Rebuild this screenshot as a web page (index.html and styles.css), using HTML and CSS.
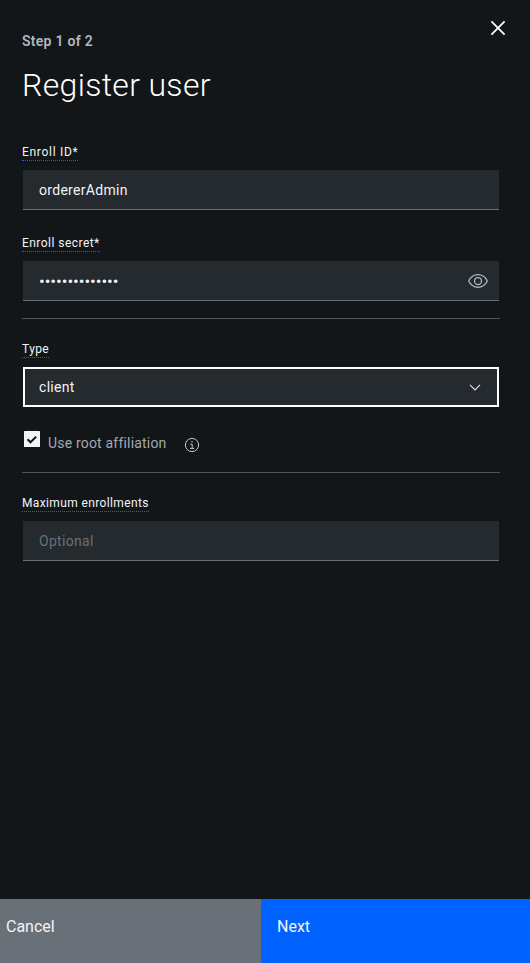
FILE: index.html
```html
<!DOCTYPE html>
<html lang="en">
<head>
<meta charset="utf-8">
<title>Register user</title>
<link rel="stylesheet" href="styles.css">
</head>
<body>
<main class="panel">
  <header class="header">
    <div>
      <p class="step"><span>Step 1 of 2</span></p>
      <h1 class="title"><span>Register user</span></h1>
    </div>
    <svg class="close" viewBox="0 0 32 32" width="24" height="24" fill="#fff"><path d="M24 9.4 22.6 8 16 14.6 9.4 8 8 9.4l6.6 6.6L8 22.6 9.4 24l6.6-6.6 6.6 6.6 1.4-1.4-6.6-6.6z" transform="translate(-3.2 -3.2) scale(1.2)"/></svg>
  </header>
  <section class="field">
    <span class="label label-id">Enroll ID*</span>
    <div class="input"><span class="value-id">ordererAdmin</span></div>
  </section>
  <section class="field secret">
    <span class="label label-secret">Enroll secret*</span>
    <div class="input"><span class="dots">••••••••••••••</span>
      <svg class="eye" viewBox="0 0 20 14" width="20" height="14" fill="none" stroke="#b5babf" stroke-width="1.25"><path d="M.7 7C2.6 3.1 5.9.7 10 .7S17.400 3.100 19.300 7C17.400 10.900 14.100 13.300 10 13.300S2.600 10.900.7 7z"/><circle cx="10" cy="7" r="3.500"/></svg>
    </div>
  </section>
  <hr class="rule">
  <section class="field type">
    <span class="label label-type">Type</span>
    <div class="input select"><span class="value-type">client</span>
      <svg class="chevron" viewBox="0 0 12 7" width="12" height="7" fill="none" stroke="#dde1e6" stroke-width="1.200"><path d="m1 .9 5 5 5-5"/></svg>
    </div>
  </section>
  <div class="check-row">
    <svg class="checkbox" viewBox="0 0 16 16" width="16" height="16"><rect width="16" height="16" rx=".6" fill="#f2f4f8"/><path d="m3.500 8.300 3 3 5.700-5.700" fill="none" stroke="#121619" stroke-width="2"/></svg>
    <span class="check-text">Use root affiliation</span>
    <svg class="info" viewBox="0 0 16 16" width="16" height="16" fill="none" stroke="#c1c7cd"><circle cx="8" cy="8" r="6.600"/><path d="M6.300 7.200h1.900v4M6 11.400h4.200"/><circle cx="8" cy="4.700" r=".75" fill="#c1c7cd" stroke="none"/></svg>
  </div>
  <hr class="rule">
  <section class="field maximum">
    <span class="label label-max">Maximum enrollments</span>
    <div class="input"><span class="placeholder">Optional</span></div>
  </section>
  <footer class="actions">
    <div class="button cancel"><span>Cancel</span></div>
    <div class="button next"><span>Next</span></div>
  </footer>
</main>
</body>
</html>
```
FILE: styles.css
```css
* { box-sizing: border-box; }
body { margin: 0; background: #121619; color: #f2f4f8; font-family: Roboto, "Liberation Sans", sans-serif; }
p, h1 { margin: 0; }
svg { display: block; flex: none; }
.panel { height: 963px; display: flex; flex-direction: column; }
.header { display: flex; justify-content: space-between; height: 143px; padding: 16px 20px 0 22px; }
.step { margin-top: 16px; font-size: 14px; line-height: 18px; font-weight: 600; color: #b3b8bf; letter-spacing: .28px; }
.title { margin-top: 15px; font-size: 32px; line-height: 40px; font-weight: 300; color: #fff; letter-spacing: .33px; }
.field { margin: 0 30px 0 22px; height: 67px; }
.label { display: block; width: max-content; height: 18px; border-bottom: 1px dotted #0f62fe; font-size: 12px; line-height: 19px; letter-spacing: .4px; white-space: nowrap; }
.label-id { letter-spacing: .7px; }
.label-secret { letter-spacing: .46px; }
.label-max { letter-spacing: .37px; }
.input { display: flex; align-items: center; justify-content: space-between; height: 40px; margin: 9px 1px 0; padding: 0 11px 0 16px; background: #242a2e; border-bottom: 1px solid #697077; font-size: 14px; letter-spacing: .3px; }
.secret { margin-top: 24px; }
.rule { flex: none; height: 1px; width: 478px; margin: 17px 0 0 22px; border: 0; background: #4d5358; }
.type { margin-top: 21px; }
.select { border: 2px solid #fff; padding: 0 16px 0 14px; }
.eye { margin-top: 1px; }
.dots { font-size: 17px; line-height: 20px; letter-spacing: -.06px; }
.check-row { display: flex; height: 48px; padding: 24px 0 0 24px; }
.check-text { margin: 3px 0 0 8px; width: 128px; font-size: 14px; line-height: 18px; letter-spacing: .19px; color: #a2a9b0; white-space: nowrap; }
.info { margin: 6px 0 0 8px; }
.maximum { margin-top: 21px; }
.placeholder { color: #697077; }
.actions { display: grid; grid-template-columns: 261px 1fr; height: 64px; margin-top: auto; }
.button { font-size: 16px; line-height: 22px; padding-top: 17px; color: #f2f4f8; }
.cancel { background: #697077; padding-left: 6px; }
.next { background: #0062ff; padding-left: 16px; }
```
